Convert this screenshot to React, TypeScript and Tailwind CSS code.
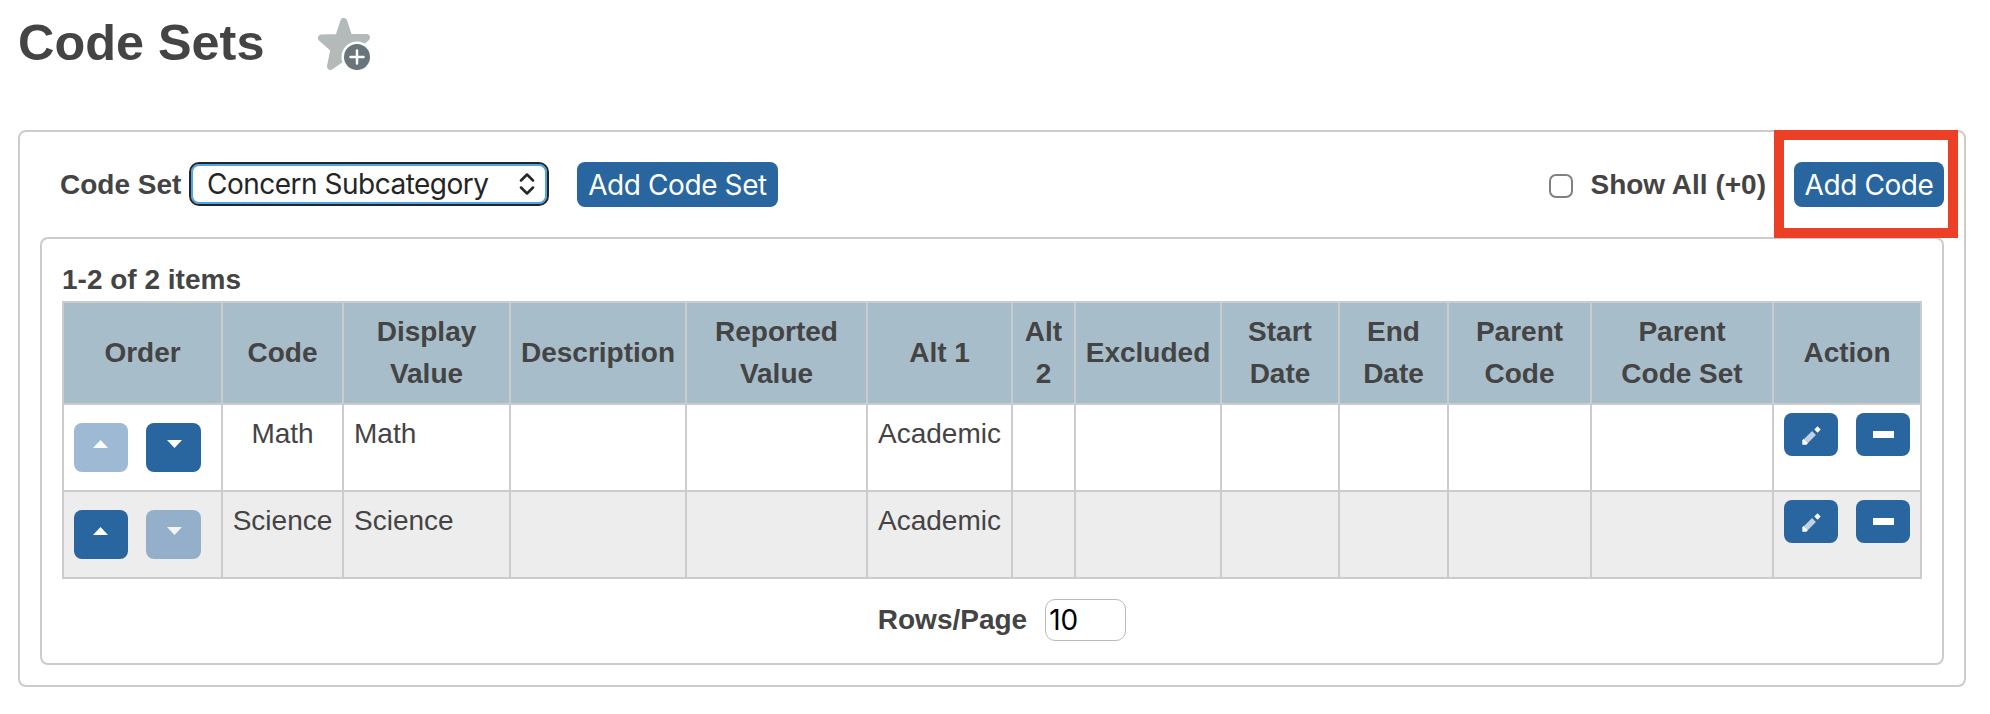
import { useState } from "react";
import clsx from "clsx";

const columns = [
  { label: "Order", width: "w-[159px]" },
  { label: "Code", width: "w-[121px]" },
  { label: "Display Value", width: "w-[167px]" },
  { label: "Description", width: "w-[176px]" },
  { label: "Reported Value", width: "w-[181px]" },
  { label: "Alt 1", width: "w-[145px]" },
  { label: "Alt 2", width: "w-[63px]" },
  { label: "Excluded", width: "w-[146px]" },
  { label: "Start Date", width: "w-[118px]" },
  { label: "End Date", width: "w-[109px]" },
  { label: "Parent Code", width: "w-[143px]" },
  { label: "Parent Code Set", width: "w-[182px]" },
  { label: "Action", width: "w-[148px]" },
];

const codes = [
  { code: "Math", display: "Math", alt1: "Academic" },
  { code: "Science", display: "Science", alt1: "Academic" },
];

const FavoriteIcon = () => (
  <svg width="54" height="54" viewBox="0 0 54 54">
    <path
      d="M25.8 3.5L31 19.5H48.5L36 30L40 48L26 39L12.5 48.5L16 31L3.5 20L20.5 19.5Z"
      fill="#b4b9ba"
      stroke="#b4b9ba"
      strokeWidth="7"
      strokeLinejoin="round"
    />
    <path d="M22 54L27 44L39 39V54Z" fill="#fff" />
    <circle cx="39" cy="39" r="15.5" fill="#fff" />
    <circle cx="39" cy="39" r="13" fill="#69757a" />
    <path
      d="M39 32.5V45.5M32.5 39H45.5"
      stroke="#fff"
      strokeWidth="2.5"
      strokeLinecap="round"
    />
  </svg>
);

const MoveIcon = ({ up }: { up?: boolean }) => (
  <svg width="15" height="8" viewBox="0 0 15 8">
    <path d={up ? "M7.5 0L15 8H0Z" : "M0 0H15L7.5 8Z"} fill="#fff" />
  </svg>
);

const PencilIcon = () => (
  <svg width="19" height="19" viewBox="0 0 19 19">
    <path d="M4 15L12 7" stroke="#bfd1e3" strokeWidth="5.5" />
    <path d="M0.3 18.700V14.300L1.800 12.800L6 17L4.500 18.700Z" fill="#fff" />
    <path
      d="M12.300 3.400L15.500 0.300L18.700 3.500L15.600 6.700Z"
      fill="#fff"
    />
  </svg>
);

export default function App() {
  const [showAll, setShowAll] = useState(false);
  const [rows, setRows] = useState("10");

  return (
    <main className="h-[714px] w-[1990px] bg-white pr-6 pl-[18px] font-['Liberation_Sans',Arial,sans-serif] text-[28px] leading-[42px] text-[#444]">
      <header className="flex h-[130px] items-start pt-[13px]">
        <h1 className="w-[300px] text-[50.4px] leading-[60px] font-bold">
          Code Sets
        </h1>
        <button aria-label="Add to favorites" className="mt-[5px]">
          <FavoriteIcon />
        </button>
      </header>

      <section className="h-[557px] rounded-lg border-2 border-[#ccc] px-5">
        <div className="relative flex h-[105px] items-start pt-[30px]">
          <label className="w-[149px] pt-[2px] pl-5 font-bold whitespace-nowrap">
            Code Set
          </label>
          <button className="flex h-[44px] w-[360px] items-center justify-between rounded-[10px] border-2 border-[#252525] pr-[12px] pl-[16px] font-['Inter',sans-serif] tracking-[-0.5px] whitespace-nowrap text-[#252525] ring-2 ring-[#4ea6e6] ring-inset">
            Concern Subcategory
            <svg width="16" height="22" viewBox="0 0 16 22" fill="none">
              <path
                d="M2 7.5L8 1.5L14 7.5M2 14.5L8 20.5L14 14.5"
                stroke="#252525"
                strokeWidth="2.5"
                strokeLinecap="round"
                strokeLinejoin="round"
              />
            </svg>
          </button>
          <button className="ml-7 h-[45px] w-[201px] rounded-lg bg-[#29659f] font-['Inter',sans-serif] tracking-[-0.4px] whitespace-nowrap text-white">
            Add Code Set
          </button>
          <label className="ml-auto flex pt-[2px] font-bold whitespace-nowrap">
            <input
              type="checkbox"
              checked={showAll}
              onChange={(e) => setShowAll(e.target.checked)}
              className="mt-[10px] mr-[17px] size-6 appearance-none rounded-[7px] border-2 border-[#808080] bg-white"
            />
            Show All (+0)
          </label>
          <button className="ml-7 h-[45px] w-[150px] rounded-lg bg-[#29659f] font-['Inter',sans-serif] tracking-[-0.4px] whitespace-nowrap text-white">
            Add Code
          </button>
          <div className="pointer-events-none absolute -top-[2px] -right-[14px] h-[108px] w-[184px] border-10 border-[#eb3f26]" />
        </div>

        <div className="h-[428px] rounded-lg border-2 border-[#ccc] px-5">
          <p className="h-[62px] pt-5 font-bold">1-2 of 2 items</p>
          <table className="w-[1860px] table-fixed border-collapse">
            <thead>
              <tr className="h-[102px] bg-[#a8bdca]">
                {columns.map((column) => (
                  <th
                    key={column.label}
                    className={clsx(
                      "border-2 border-[#ccc] px-2 py-0 font-bold",
                      column.width
                    )}
                  >
                    {column.label}
                  </th>
                ))}
              </tr>
            </thead>
            <tbody>
              {codes.map((item, i) => (
                <tr
                  key={item.code}
                  className="h-[87px] align-top even:bg-[#ededed] [&>td]:border-2 [&>td]:border-[#ccc] [&>td]:pt-2"
                >
                  <td>
                    <div className="flex gap-[18px] pt-[10px] pl-[10px]">
                      <button
                        disabled={i === 0}
                        aria-label="Move up"
                        className="flex h-[49px] w-[54px] justify-center rounded-lg bg-[#29659f] pt-[17px] pr-[2px] disabled:opacity-45"
                      >
                        <MoveIcon up />
                      </button>
                      <button
                        disabled={i === codes.length - 1}
                        aria-label="Move down"
                        className="flex h-[49px] w-[55px] justify-center rounded-lg bg-[#29659f] pt-[17px] pl-px disabled:opacity-45"
                      >
                        <MoveIcon />
                      </button>
                    </div>
                  </td>
                  <td className="text-center">{item.code}</td>
                  <td className="pl-[10px]">{item.display}</td>
                  <td />
                  <td />
                  <td className="text-center">{item.alt1}</td>
                  <td />
                  <td />
                  <td />
                  <td />
                  <td />
                  <td />
                  <td>
                    <div className="flex gap-[18px] pl-[10px]">
                      <button
                        aria-label="Edit"
                        className="flex h-[43px] w-[54px] items-center justify-center rounded-lg bg-[#29659f] pt-px pl-px"
                      >
                        <PencilIcon />
                      </button>
                      <button
                        aria-label="Remove"
                        className="flex h-[43px] w-[54px] items-center justify-center rounded-lg bg-[#29659f]"
                      >
                        <span className="h-[7px] w-[21px] bg-white" />
                      </button>
                    </div>
                  </td>
                </tr>
              ))}
            </tbody>
          </table>
          <div className="flex items-start justify-center pt-5 pl-5">
            <label className="mr-[18px] font-bold">Rows/Page</label>
            <input
              value={rows}
              onChange={(e) => setRows(e.target.value)}
              className="h-[42px] w-[81px] rounded-[10px] border border-[#bbb] px-[3px] font-['Inter',sans-serif] text-black"
            />
          </div>
        </div>
      </section>
    </main>
  );
}
